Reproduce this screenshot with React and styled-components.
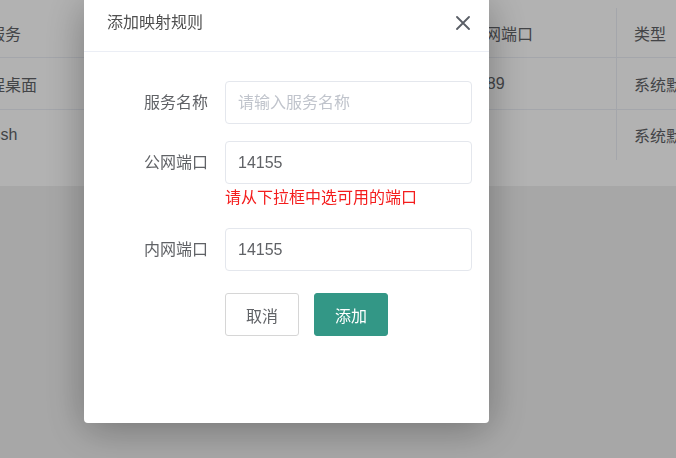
import React from "react";
import styled, { createGlobalStyle } from "styled-components";

const Global = createGlobalStyle`
  html, body { margin: 0; padding: 0; }
  body {
    background: #f0f0f0;
    font-family: "Liberation Sans", "Noto Sans CJK SC", sans-serif;
    overflow: hidden;
  }
`;

const Page = styled.div`
  position: relative;
  width: 676px;
  height: 458px;
  overflow: hidden;
`;

const Card = styled.div`
  background: #fff;
  height: 186px;
  padding-top: 8px;
  box-sizing: border-box;
  overflow: hidden;
`;

const Table = styled.div`
  margin-left: -60px;
  width: 876px;
`;

const Row = styled.div`
  display: grid;
  grid-template-columns: 130px 381px 165px 200px;
  height: ${(p) => p.$h}px;
  border-bottom: ${(p) => (p.$last ? "none" : "1px solid #ebeef5")};
`;

const Cell = styled.div`
  display: flex;
  align-items: center;
  justify-content: ${(p) => (p.$center ? "center" : "flex-start")};
  padding: 0 17px;
  font-size: 16px;
  color: #606266;
  white-space: nowrap;
  overflow: hidden;
  border-left: ${(p) => (p.$divider ? "1px solid #ebeef5" : "none")};
  box-sizing: border-box;
`;

const Overlay = styled.div`
  position: fixed;
  inset: 0;
  background: rgba(0, 0, 0, 0.3);
  padding-left: 84px;
`;

const Modal = styled.div`
  width: 405px;
  height: 423px;
  background: #fff;
  border-radius: 0 0 4px 4px;
  box-shadow: 0 6px 40px rgba(0, 0, 0, 0.32);
  display: flex;
  flex-direction: column;
`;

const Header = styled.div`
  height: 52px;
  box-sizing: border-box;
  padding: 12px 19px 0 23px;
  display: flex;
  align-items: flex-start;
  justify-content: space-between;
  border-bottom: 1px solid #ebeef5;
`;

const Title = styled.div`
  font-size: 16px;
  line-height: 22px;
  color: #505050;
`;

const Close = styled.button`
  border: none;
  background: transparent;
  padding: 0;
  margin-top: 4px;
  width: 14px;
  height: 14px;
  display: flex;
  cursor: pointer;
`;

const Body = styled.div`
  padding: 29px 17px 0 0;
  display: flex;
  flex-direction: column;
`;

const FormRow = styled.div`
  display: flex;
  align-items: flex-start;
  margin-top: ${(p) => p.$mt || 0}px;
`;

const Label = styled.div`
  width: 141px;
  padding-right: 17px;
  box-sizing: border-box;
  text-align: right;
  font-size: 16px;
  line-height: 43px;
  color: #606266;
  flex-shrink: 0;
`;

const Field = styled.div`
  display: flex;
  flex-direction: column;
  flex: 1;
`;

const Input = styled.input`
  box-sizing: border-box;
  width: 247px;
  height: 43px;
  border: 1px solid #e4e7ed;
  border-radius: 4px;
  padding: 0 12px;
  font-family: inherit;
  font-size: 16px;
  color: #606266;
  outline: none;
  &::placeholder { color: #c0c4cc; }
`;

const Error = styled.div`
  color: #f41d1d;
  font-size: 16px;
  line-height: 22px;
  padding-top: 3px;
`;

const Actions = styled.div`
  display: flex;
  gap: 15px;
  margin: 22px 0 0 141px;
`;

const Button = styled.button`
  width: 74px;
  height: 43px;
  box-sizing: border-box;
  border-radius: 3px;
  font-family: inherit;
  font-size: 16px;
  cursor: pointer;
  border: 1px solid ${(p) => (p.$primary ? "#339786" : "#d6d6d6")};
  background: ${(p) => (p.$primary ? "#339786" : "#fff")};
  color: ${(p) => (p.$primary ? "#fff" : "#606266")};
`;

const rows = [
  { h: 49, cells: ["服务", "公网端口", "内网端口", "类型"] },
  { h: 51, cells: ["远程桌面", "13389", "3389", "系统默认"] },
  { h: 50, cells: ["ssh", "10022", "22", "系统默认"], last: true },
];

export default function App() {
  return (
    <Page>
      <Global />
      <Card>
        <Table>
          {rows.map((r, i) => (
            <Row key={i} $h={r.h} $last={r.last}>
              <Cell $center>{r.cells[0]}</Cell>
              <Cell>{r.cells[1]}</Cell>
              <Cell $divider>{r.cells[2]}</Cell>
              <Cell $divider>{r.cells[3]}</Cell>
            </Row>
          ))}
        </Table>
      </Card>
      <Overlay>
        <Modal>
          <Header>
            <Title>添加映射规则</Title>
            <Close aria-label="关闭">
              <svg width="14" height="14" viewBox="0 0 14 14">
                <path d="M1 1 L13 13 M13 1 L1 13" stroke="#5a5e66" strokeWidth="1.8" strokeLinecap="round" fill="none" />
              </svg>
            </Close>
          </Header>
          <Body>
            <FormRow>
              <Label>服务名称</Label>
              <Field>
                <Input placeholder="请输入服务名称" />
              </Field>
            </FormRow>
            <FormRow $mt={17}>
              <Label>公网端口</Label>
              <Field>
                <Input defaultValue="14155" />
                <Error>请从下拉框中选可用的端口</Error>
              </Field>
            </FormRow>
            <FormRow $mt={19}>
              <Label>内网端口</Label>
              <Field>
                <Input defaultValue="14155" />
              </Field>
            </FormRow>
            <Actions>
              <Button>取消</Button>
              <Button $primary>添加</Button>
            </Actions>
          </Body>
        </Modal>
      </Overlay>
    </Page>
  );
}
